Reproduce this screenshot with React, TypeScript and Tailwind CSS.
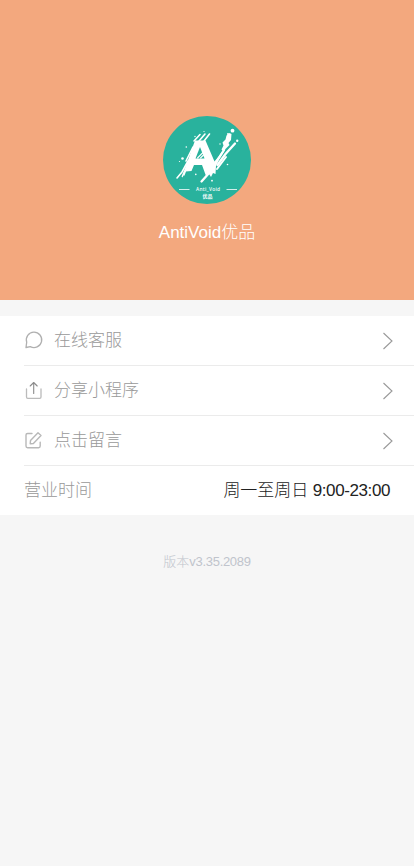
import type { ReactNode } from 'react'

const Logo = () => (
  <svg viewBox="6 6 88 88" className="w-22 h-22">
    <circle cx="50" cy="50" r="44" fill="#29b29d" />
    {/* Letters */}
    <g fill="#fff">
      <path d="M38 30.500h10.500l9 21 4-5 4-6-1-1 2-4-1-3 3-3 1-4 3-2.500 2 1-.5 6-2.500 3 1 2-4 4-1.500 3-5 8-3 6-.5 8-2.500-1-2 4-2-3-3 2-4-11H37l-2.500 6-6 .5-3 6-1-1 4.500-11z" />
    </g>
    <path d="M43 37l-4.500 11.500h9z" fill="#29b29d" />
    {/* Splashes */}
    <g stroke="#fff" strokeLinecap="round" fill="none">
      <path d="M37 31l6-6.500M42 31l6-7M47 31l5.500-7" strokeWidth="1.600" />
      <path d="M36 37l-7 14M31 51l-6 11-5 6" strokeWidth="1.600" />
      <path d="M30 57l-3 8" strokeWidth="1.300" />
      <path d="M78 33.500l-9.500 10.500-8 11" strokeWidth="2.300" />
      <path d="M67 40l-8 12M69 47l-9 12" strokeWidth="2" />
      <path d="M53 62l-8.500 9.500" strokeWidth="2.300" />
      <path d="M40.500 48l5.500-5.500M43.500 48l3-3" strokeWidth="1.100" />
    </g>
    <g fill="#fff">
      <circle cx="75.500" cy="20.700" r="1.900" />
      <circle cx="80.200" cy="30.800" r="1.200" />
      <circle cx="71" cy="24" r="1" />
      <circle cx="47" cy="21.500" r=".6" />
      <circle cx="38" cy="26.500" r=".7" />
      <circle cx="29.300" cy="37" r=".8" />
      <circle cx="25.500" cy="48.500" r="1.300" />
      <circle cx="22.500" cy="51.500" r=".6" />
      <circle cx="38.800" cy="64.400" r=".8" />
      <circle cx="55" cy="70.700" r=".9" />
      <circle cx="70.500" cy="54.500" r=".8" />
      <circle cx="63" cy="34" r=".7" />
    </g>
    <path d="M22 79.500h10.500M69.500 79.500h10.500" stroke="#fff" strokeWidth=".8" />
    <text
      x="51"
      y="80.700"
      textAnchor="middle"
      textLength="24"
      fill="#fff"
      className="text-[4.800px] font-medium font-['Noto_Sans',sans-serif]"
    >
      Anti_Void
    </text>
    <text
      x="50.500"
      y="88"
      textAnchor="middle"
      fill="#fff"
      className="text-[5px] font-bold font-['Noto_Sans_CJK_SC',sans-serif]"
    >
      优品
    </text>
  </svg>
)

const ChatIcon = (
  <svg viewBox="0 0 20 20" className="w-5 h-5 -mt-px" fill="none" stroke="#b0b0b0" strokeWidth="1.300" strokeLinejoin="round">
    <path d="M2 17.500l.7-5.300a7.700 7.700 0 1 1 3.600 4.400z" />
  </svg>
)

const ShareIcon = (
  <svg viewBox="0 0 20 20" className="w-5 h-5 -mt-px" fill="none" strokeLinecap="round" strokeLinejoin="round">
    <path d="M2.500 9v8q0 1.300 1.300 1.300h11.900q1.300 0 1.300-1.300V9" stroke="#bbb" strokeWidth="1.300" />
    <path d="M9.700 13.500V2.800M6.200 6l3.500-3.500L13.200 6" stroke="#8c8c8c" strokeWidth="1.100" />
  </svg>
)

const EditIcon = (
  <svg viewBox="0 0 20 20" className="w-5 h-5 -mt-px" fill="none" stroke="#b8b8b8" strokeWidth="1.400" strokeLinecap="round" strokeLinejoin="round">
    <path d="M8 3.500H3.600Q2 3.500 2 5.100v11Q2 17.700 3.600 17.700h11q1.600 0 1.600-1.600v-4" />
    <path d="M14 2.800l3 2.700-7.600 8-3.200.3.300-3.200z" />
  </svg>
)

const items: { label: string; icon: ReactNode }[] = [
  { label: '在线客服', icon: ChatIcon },
  { label: '分享小程序', icon: ShareIcon },
  { label: '点击留言', icon: EditIcon },
]

export default function App() {
  return (
    <div className="min-h-screen bg-[#f6f6f6] font-light font-['Liberation_Sans','Noto_Sans_CJK_SC',sans-serif]">
      <header className="h-75 pt-29 flex flex-col items-center bg-[#f3a87e]">
        <Logo />
        <h1 className="mt-[17px] text-[17px] leading-6 text-white">AntiVoid优品</h1>
      </header>

      <div className="mt-4 pl-6 bg-white text-[17px] text-[#999]">
        {items.map((item) => (
          <div key={item.label} className="h-[50px] pr-5 flex items-center border-b border-[#ebebeb]">
            {item.icon}
            <span className="ml-2.5 leading-6">{item.label}</span>
            <svg viewBox="0 0 12 20" className="w-3 h-5 ml-auto" fill="none" stroke="#999" strokeWidth="1.100">
              <path d="M1.500 2l8.500 8-8.500 8" />
            </svg>
          </div>
        ))}
        <div className="h-[49px] pr-6 flex items-center justify-between">
          <span>营业时间</span>
          <span className="text-[#222]">
            周一至周日<span className="tracking-[-0.4px]"> 9:00-23:00</span>
          </span>
        </div>
      </div>

      <p className="mt-[37px] text-center text-[13px] leading-5 text-[#c0c4cc]">
        版本<span className="tracking-[-0.3px]">v3.35.2089</span>
      </p>
    </div>
  )
}
